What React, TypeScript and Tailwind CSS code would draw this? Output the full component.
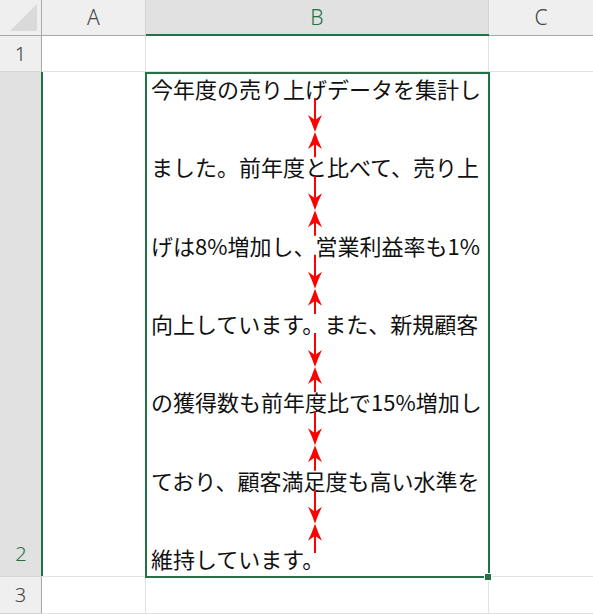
import React from 'react';

const lines = [
  '今年度の売り上げデータを集計し',
  'ました。前年度と比べて、売り上',
  'げは8%増加し、営業利益率も1%',
  '向上しています。また、新規顧客',
  'の獲得数も前年度比で15%増加し',
  'ており、顧客満足度も高い水準を',
  '維持しています。',
];

// text line centres (page coords), used for the red arrows
const centres = [88, 166.33, 244.67, 323, 401.33, 479.67, 558];
const AX = 315;

function downHead(t: number) {
  return `M${AX},${t} Q${AX - 3},${t - 9} ${AX - 7},${t - 17} L${AX},${t - 12} L${AX + 7},${t - 17} Q${AX + 3},${t - 9} ${AX},${t} Z`;
}
function upHead(t: number) {
  return `M${AX},${t} Q${AX - 3},${t + 9} ${AX - 7},${t + 17} L${AX},${t + 12} L${AX + 7},${t + 17} Q${AX + 3},${t + 9} ${AX},${t} Z`;
}

function Arrows() {
  const gaps = centres.slice(0, -1).map((c, i) => {
    const next = centres[i + 1];
    const tip = c + 44;
    const end = i === centres.length - 2 ? 553 : next - 9;
    return (
      <g key={i}>
        <line x1={AX} y1={c + 10} x2={AX} y2={tip - 8} stroke="#ff0000" strokeWidth="2" />
        <line x1={AX} y1={tip + 8} x2={AX} y2={end} stroke="#ff0000" strokeWidth="2" />
        <path d={downHead(tip)} fill="#ff0000" />
        <path d={upHead(tip)} fill="#ff0000" />
      </g>
    );
  });
  return (
    <svg className="absolute left-0 top-0 pointer-events-none" width="593" height="614" viewBox="0 0 593 614">
      {gaps}
    </svg>
  );
}

const headFont = { fontFamily: '"Noto Sans", "Liberation Sans", sans-serif' };

export default function App() {
  return (
    <div className="relative w-[593px] h-[614px] bg-white overflow-hidden">
      <div
        className="grid grid-cols-[42px_104px_343px_104px] grid-rows-[36px_36px_505px_37px] text-[#444]"
        style={headFont}
      >
        {/* header row */}
        <div className="bg-[#efefef] border-b border-r border-[#a8a8a8] flex items-end justify-end pr-[3px] pb-[3px]">
          <svg width="28" height="28" viewBox="0 0 28 28">
            <path d="M27 0 L27 27 L0 27 Z" fill="#dadada" />
          </svg>
        </div>
        <div className="bg-[#efefef] border-b border-r border-b-[#a8a8a8] border-r-[#d4d4d4] flex items-center justify-center text-[21px] font-light">
          A
        </div>
        <div className="relative bg-[#e1e1e1] border-r border-[#d4d4d4] flex items-center justify-center text-[21px] font-light text-[#217346]">
          B
          <div className="absolute left-0 -right-px bottom-0 h-[2px] bg-[#217346]" />
        </div>
        <div className="bg-[#efefef] border-b border-[#a8a8a8] flex items-center justify-center text-[21px] font-light">
          C
        </div>

        {/* row 1 */}
        <div className="bg-[#efefef] border-r border-b border-r-[#a8a8a8] border-b-[#d4d4d4] flex items-center justify-center text-[20px] font-light">
          1
        </div>
        <div className="border-r border-b border-[#e1e1e1]" />
        <div className="border-r border-b border-[#e1e1e1]" />
        <div className="border-b border-[#e1e1e1]" />

        {/* row 2 */}
        <div className="relative bg-[#e1e1e1] border-b border-[#d4d4d4] flex items-end justify-center pb-[7px] text-[20px] font-light text-[#217346]">
          2
          <div className="absolute top-0 -right-px bottom-0 w-[2px] bg-[#217346]" />
        </div>
        <div className="border-r border-b border-[#e1e1e1]" />
        <div
          className="relative flex flex-col justify-between pl-[5px] pt-[2px] pb-[5px] text-[22px] leading-[28px] text-[#111] whitespace-nowrap"
          style={{ fontFamily: '"Noto Sans CJK JP", "Noto Sans", sans-serif' }}
        >
          {lines.map((l, i) => (
            <div key={i}>{l}</div>
          ))}
          <div className="absolute -left-px -right-px top-0 -bottom-px border-2 border-[#217346]" />
        </div>
        <div className="border-b border-[#e1e1e1]" />

        {/* row 3 */}
        <div className="bg-[#efefef] border-r border-b border-r-[#a8a8a8] border-b-[#d4d4d4] flex items-center justify-center text-[20px] font-light">
          3
        </div>
        <div className="border-r border-b border-[#e1e1e1]" />
        <div className="border-r border-b border-[#e1e1e1]" />
        <div className="border-b border-[#e1e1e1]" />
      </div>

      <Arrows />

      {/* fill handle */}
      <div className="absolute left-[484px] top-[573px] w-[8px] h-[8px] bg-[#217346] border border-white" />
    </div>
  );
}
